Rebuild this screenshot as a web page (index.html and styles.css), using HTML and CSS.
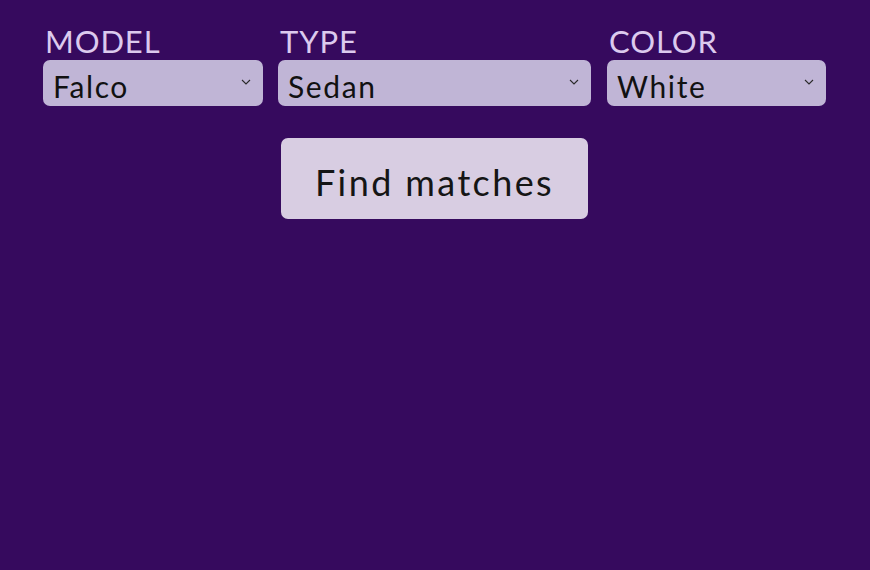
FILE: index.html
```html
<!DOCTYPE html>
<html>
<head>
<meta charset="utf-8">
<link rel="stylesheet" href="styles.css">
</head>
<body>
<main class="page">
  <div class="filters">
    <div class="field field-model">
      <div class="label">MODEL</div>
      <div class="select"><span class="value">Falco</span><svg class="chev" width="10" height="6" viewBox="0 0 10 6"><path d="M1 1l4 4 4-4" fill="none" stroke="#2a2a2a" stroke-width="1.1"/></svg></div>
    </div>
    <div class="field field-type">
      <div class="label">TYPE</div>
      <div class="select"><span class="value">Sedan</span><svg class="chev" width="10" height="6" viewBox="0 0 10 6"><path d="M1 1l4 4 4-4" fill="none" stroke="#2a2a2a" stroke-width="1.1"/></svg></div>
    </div>
    <div class="field field-color">
      <div class="label">COLOR</div>
      <div class="select"><span class="value">White</span><svg class="chev" width="10" height="6" viewBox="0 0 10 6"><path d="M1 1l4 4 4-4" fill="none" stroke="#2a2a2a" stroke-width="1.1"/></svg></div>
    </div>
  </div>
  <div class="actions">
    <button class="btn">Find matches</button>
  </div>
</main>
</body>
</html>
```
FILE: styles.css
```css
html, body {
  margin: 0;
  padding: 0;
  background: #360a5e;
  height: 100%;
}
body {
  font-family: Lato, "Noto Sans", sans-serif;
}
.page {
  padding: 24px 44px 0 43px;
}
.filters {
  display: flex;
  gap: 15px;
}
.field-model { width: 220px; }
.field-type { width: 313px; }
.field-color { width: 219px; margin-left: 1px; }
.label {
  color: #dccaee;
  font-size: 31px;
  letter-spacing: 0.9px;
  line-height: 34px;
  padding-left: 2px;
  margin-bottom: 2px;
}
.select {
  height: 46px;
  background: #c0b5d6;
  border-radius: 7px;
  display: flex;
  align-items: center;
  justify-content: space-between;
  padding: 0 12px 0 10px;
  box-sizing: border-box;
}
.value {
  font-size: 30px;
  color: #111;
  padding-top: 6px;
  letter-spacing: 1.6px;
}
.chev { margin-bottom: 3px; }
.actions {
  display: flex;
  justify-content: center;
  margin-top: 32px;
}
.btn {
  width: 307px;
  height: 81px;
  background: #d8cde2;
  border: none;
  border-radius: 7px;
  font-family: Lato, "Noto Sans", sans-serif;
  font-size: 36px;
  color: #151515;
  letter-spacing: 2.4px;
  padding: 6px 0 0 0;
}
```
